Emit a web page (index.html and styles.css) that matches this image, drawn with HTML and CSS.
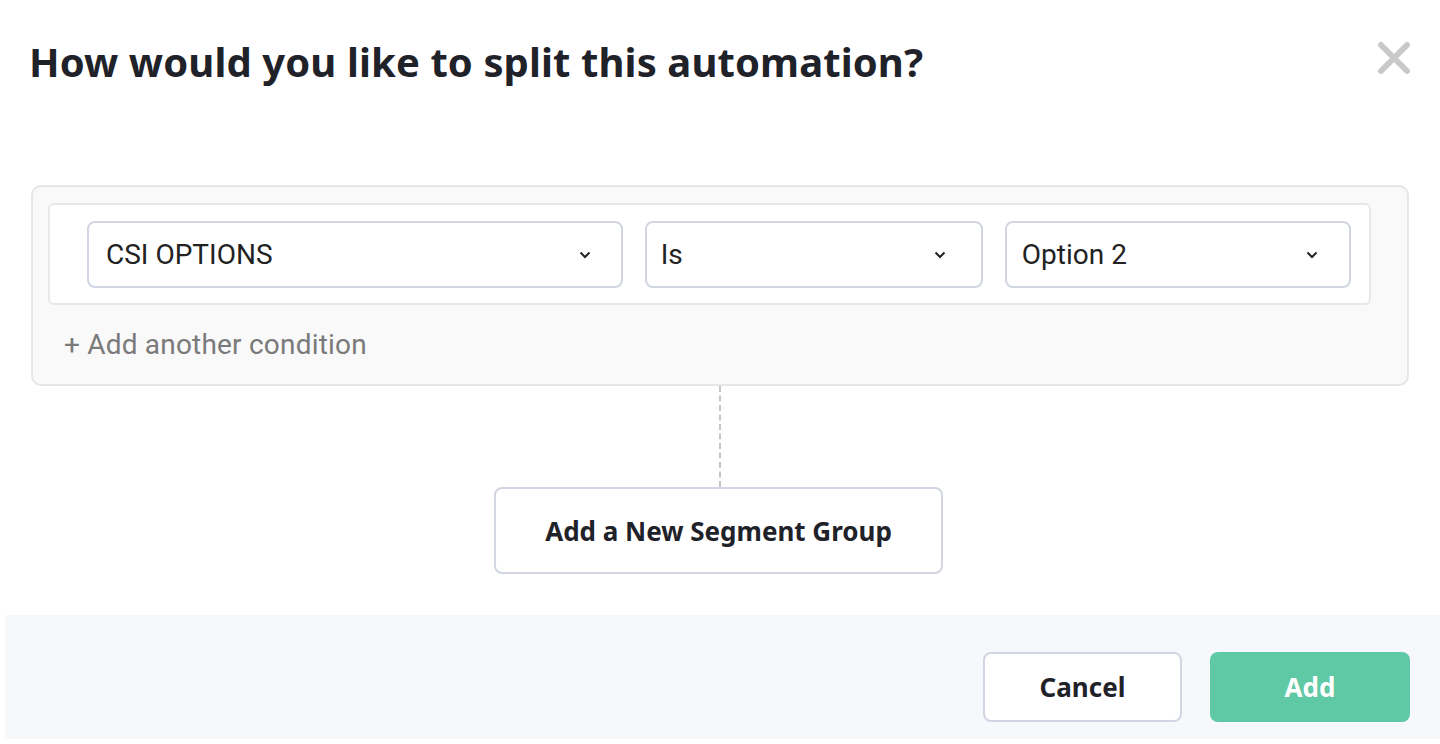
FILE: index.html
```html
<!DOCTYPE html>
<html>
<head>
<meta charset="utf-8">
<link rel="stylesheet" href="styles.css">
</head>
<body>
<div class="modal">
  <div class="header">
    <h1 class="title">How would you like to split this automation?</h1>
    <button class="close" aria-label="Close">
      <svg width="34" height="34" viewBox="0 0 34 34"><path d="M4 4 L30 30 M30 4 L4 30" stroke="#c9c9c9" stroke-width="6" stroke-linecap="round" fill="none"/></svg>
    </button>
  </div>
  <div class="content">
    <div class="panel">
      <div class="card">
        <div class="select s1"><span>CSI OPTIONS</span><svg class="chev" width="12" height="8" viewBox="0 0 12 8"><path d="M1.5 1.5 L6 6 L10.5 1.5" stroke="#222" stroke-width="2" fill="none"/></svg></div>
        <div class="select s2"><span>Is</span><svg class="chev" width="12" height="8" viewBox="0 0 12 8"><path d="M1.5 1.5 L6 6 L10.5 1.5" stroke="#222" stroke-width="2" fill="none"/></svg></div>
        <div class="select s3"><span>Option 2</span><svg class="chev" width="12" height="8" viewBox="0 0 12 8"><path d="M1.5 1.5 L6 6 L10.5 1.5" stroke="#222" stroke-width="2" fill="none"/></svg></div>
      </div>
      <div class="add-condition">+ Add another condition</div>
    </div>
    <div class="connector"></div>
    <button class="segment-btn">Add a New Segment Group</button>
  </div>
  <div class="footer">
    <button class="btn cancel">Cancel</button>
    <button class="btn add">Add</button>
  </div>
</div>
</body>
</html>
```

FILE: styles.css
```css
* { box-sizing: border-box; }
html, body { margin: 0; padding: 0; background: #fff; }
body { font-family: "Noto Sans", "Inter", sans-serif; color: #1f2229; width: 1440px; height: 744px; overflow: hidden; }
.modal { width: 1440px; }
.header { display: flex; justify-content: space-between; align-items: flex-start; padding: 34px 29px 0 29px; height: 185px; }
.title { margin: 0; font-size: 40px; line-height: 56px; font-weight: 700; letter-spacing: 0.1px; color: #1f2229; }
.close { border: 0; background: none; padding: 0; margin-top: 7px; width: 34px; height: 34px; }
.content { display: flex; flex-direction: column; align-items: center; }
.panel { align-self: stretch; margin: 0 31px; background: #f9f9f9; border: 2px solid #e6e6e6; border-radius: 10px; padding: 16px 36px 0 15px; height: 201px; }
.card { display: flex; gap: 22px; background: #fff; border: 2px solid #e8e8e8; border-radius: 6px; padding: 16px 18px 15px 37px; }
.select { display: flex; align-items: center; justify-content: space-between; height: 67px; border: 2px solid #d2d6e3; border-radius: 8px; padding: 0 30px 0 17px; font-family: "Roboto", "Noto Sans", sans-serif; font-size: 28px; color: #222; }
.s1 { width: 537px; }
.s2 { width: 339px; padding-left: 14px; padding-right: 35px; }
.s3 { width: 347px; padding-left: 15px; padding-right: 31px; }
.chev { flex: none; }
.add-condition { font-family: "Roboto", "Noto Sans", sans-serif; font-size: 28px; letter-spacing: 0.2px; color: #7a7a7a; padding: 22px 0 0 16px; line-height: 36px; }
.connector { width: 0; height: 101px; border-left: 2px dashed #c4c4c4; }
.segment-btn { width: 449px; height: 87px; background: #fff; border: 2px solid #d2d6e3; border-radius: 8px; font-family: "Noto Sans", "Inter", sans-serif; font-weight: 700; font-size: 26px; color: #1f2229; margin-left: -3px; }
.footer { margin: 41px 0 0 5px; background: #f7f8fc; height: 124px; display: flex; justify-content: flex-end; gap: 28px; padding: 37px 30px 0 0; }
.btn { width: 200px; height: 70px; border-radius: 8px; font-family: "Noto Sans", "Inter", sans-serif; font-weight: 700; font-size: 26px; }
.cancel { background: #fff; border: 2px solid #d2d6e3; color: #1f2229; width: 199px; }
.add { background: #5fc8a4; border: 0; color: #fff; }
```
